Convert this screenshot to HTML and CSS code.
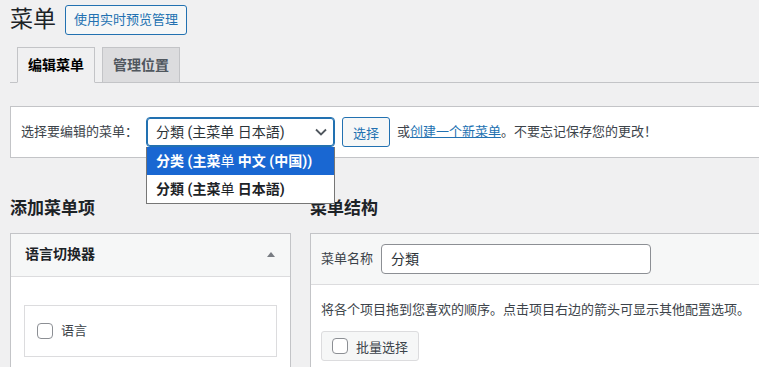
FILE: index.html
```html
<!DOCTYPE html>
<html lang="zh-CN">
<head>
    <meta charset="UTF-8">
    <title>菜单</title>
    <meta name="viewport" content="width=device-width, initial-scale=1.0">
    <link rel="stylesheet" href="styles.css">
</head>
<body>
    <div class="wrap">
        <div class="title-row">
            <h1 class="page-title">菜单</h1>
            <a class="title-action" href="#">使用实时预览管理</a>
        </div>

        <nav class="tabs">
            <a class="tab active" href="#">编辑菜单</a>
            <a class="tab" href="#">管理位置</a>
        </nav>

        <div class="manage-menus">
            <label class="select-label">选择要编辑的菜单：</label>
            <div class="select-wrap">
                <div class="select">
                    <span>分類 (主菜单 日本語)</span>
                    <svg class="chevron" width="14" height="14" viewBox="0 0 14 14">
                        <polyline points="2,4.5 7,9.5 12,4.5" fill="none" stroke="#50575e" stroke-width="1.8"/>
                    </svg>
                </div>
                <div class="dropdown">
                    <div class="option selected">分类 (主菜<span class="thin">单</span> 中文 (中国))</div>
                    <div class="option">分類 (主菜<span class="thin">单</span> 日本語)</div>
                </div>
            </div>
            <button class="btn">选择</button>
            <span class="hint">或<a href="#">创建一个新菜单</a>。不要忘记保存您的更改！</span>
        </div>

        <div class="columns">
            <div class="col-left">
                <h2>添加菜单项</h2>
                <div class="panel">
                    <div class="panel-head">
                        <span>语言切换器</span>
                        <span class="arrow-up"></span>
                    </div>
                    <div class="panel-body">
                        <div class="check-box">
                            <span class="checkbox"></span>
                            <span>语言</span>
                        </div>
                    </div>
                </div>
            </div>
            <div class="col-right">
                <h2>菜单结构</h2>
                <div class="menu-box">
                    <div class="menu-head">
                        <label class="name-label">菜单名称</label>
                        <div class="name-input">分類</div>
                    </div>
                    <div class="menu-body">
                        <p>将各个项目拖到您喜欢的顺序。点击项目右边的箭头可显示其他配置选项。</p>
                        <button class="bulk-btn"><span class="checkbox"></span>批量选择</button>
                    </div>
                </div>
            </div>
        </div>
    </div>
</body>
</html>
```

FILE: styles.css
```css
html, body { overflow: hidden; }
body {
    margin: 0; background: #f0f0f1; color: #3c434a;
    font-family: Roboto, "Noto Sans CJK SC", sans-serif; font-size: 13px; line-height: 20px;
}
a { color: #2271b1; }
.wrap { width: 830px; padding-left: 10px; }

/* title */
.title-row { display: flex; align-items: center; padding-top: 5px; height: 30px; }
.page-title {
    margin: 0 9px 0 0; font-size: 23px; font-weight: 400; line-height: 30px; color: #1d2327;
}
.title-action {
    display: block; box-sizing: border-box; height: 30px; padding: 0 8px; line-height: 28px;
    border: 1px solid #2271b1; border-radius: 3px; background: #f6f7f7;
    color: #2271b1; text-decoration: none; font-size: 13px;
}

/* tabs */
.tabs {
    display: flex; margin-top: 12px; padding-left: 7px; border-bottom: 1px solid #c3c4c7;
}
.tab {
    display: block; margin: 0 7px -1px 0; padding: 5px 10px;
    border: 1px solid #c3c4c7; background: #dcdcde; color: #50575e;
    font-size: 14px; font-weight: 600; line-height: 24px; text-decoration: none;
}
.tab.active { background: #f0f0f1; border-bottom-color: #f0f0f1; color: #000; }

/* menu selector */
.manage-menus {
    display: flex; align-items: center; margin-top: 23px; padding: 10px;
    background: #fff; border: 1px solid #c3c4c7; border-right: none;
}
.select-label { margin-right: 8px; }
.select-wrap { position: relative; margin-right: 7px; }
.select {
    box-sizing: border-box; width: 189px; height: 30px; padding: 0 6px 0 9px;
    display: flex; align-items: center; justify-content: space-between;
    border: 1px solid #2271b1; border-radius: 4px; box-shadow: inset 0 0 0 1px #2271b1;
    color: #2c3338; font-size: 14px;
}
.chevron { display: block; }
.dropdown {
    position: absolute; top: 30px; left: 0; width: 189px; box-sizing: border-box;
    background: #fff; border: 1px solid #767676; border-top: none; z-index: 5;
}
.option {
    height: 28px; line-height: 28px; padding-left: 9px;
    font-size: 14px; font-weight: 700; color: #1d2327;
}
.option.selected { background: #1967d2; color: #fff; }
.option .thin { font-weight: 400; }
.btn {
    box-sizing: border-box; height: 30px; padding: 0 10px; margin-right: 7px;
    border: 1px solid #2271b1; border-radius: 3px; background: #f6f7f7;
    color: #2271b1; font-family: inherit; font-size: 13px;
}
.hint a { text-decoration: underline; }

/* columns */
.columns { display: flex; gap: 19px; margin-top: 39px; }
.columns h2 {
    margin: 0 0 14px; font-size: 17px; font-weight: 600; line-height: 22px; color: #1d2327;
}
.col-left { width: 281px; flex-shrink: 0; }
.col-right { flex: 1; }

.panel { background: #fff; border: 1px solid #c3c4c7; height: 200px; }
.panel-head {
    display: flex; align-items: center; justify-content: space-between;
    padding: 10px 15px 11px 14px; line-height: 21px;
    background: #f6f7f7; border-bottom: 1px solid #dcdcde;
    font-size: 14px; font-weight: 600; color: #1d2327;
}
.arrow-up {
    width: 0; height: 0; border-left: 4px solid transparent; border-right: 4px solid transparent;
    border-bottom: 5px solid #787c82;
}
.panel-body { padding: 28px 13px 0; }
.check-box {
    display: flex; align-items: center; height: 50px; padding: 0 12px;
    border: 1px solid #dcdcde;
}
.checkbox {
    display: inline-block; box-sizing: border-box; width: 16px; height: 16px; margin-right: 8px;
    border: 1px solid #8c8f94; border-radius: 4px; background: #fff;
}

.menu-box { background: #fff; border: 1px solid #c3c4c7; border-right: none; height: 200px; }
.menu-head {
    display: flex; align-items: center; padding: 10px;
    background: #f6f7f7; border-bottom: 1px solid #dcdcde;
}
.name-label { margin-right: 8px; }
.name-input {
    box-sizing: border-box; width: 270px; height: 30px; line-height: 28px; padding: 0 9px;
    border: 1px solid #8c8f94; border-radius: 4px; background: #fff;
    color: #2c3338; font-size: 14px;
}
.menu-body { padding: 15px 10px 0; }
.menu-body p { margin: 0 0 11px; }
.bulk-btn {
    display: flex; align-items: center; box-sizing: border-box; height: 30px; padding: 0 10px;
    border: 1px solid #dcdcde; border-radius: 3px; background: #f6f7f7;
    color: #3c434a; font-family: inherit; font-size: 13px;
}
```
